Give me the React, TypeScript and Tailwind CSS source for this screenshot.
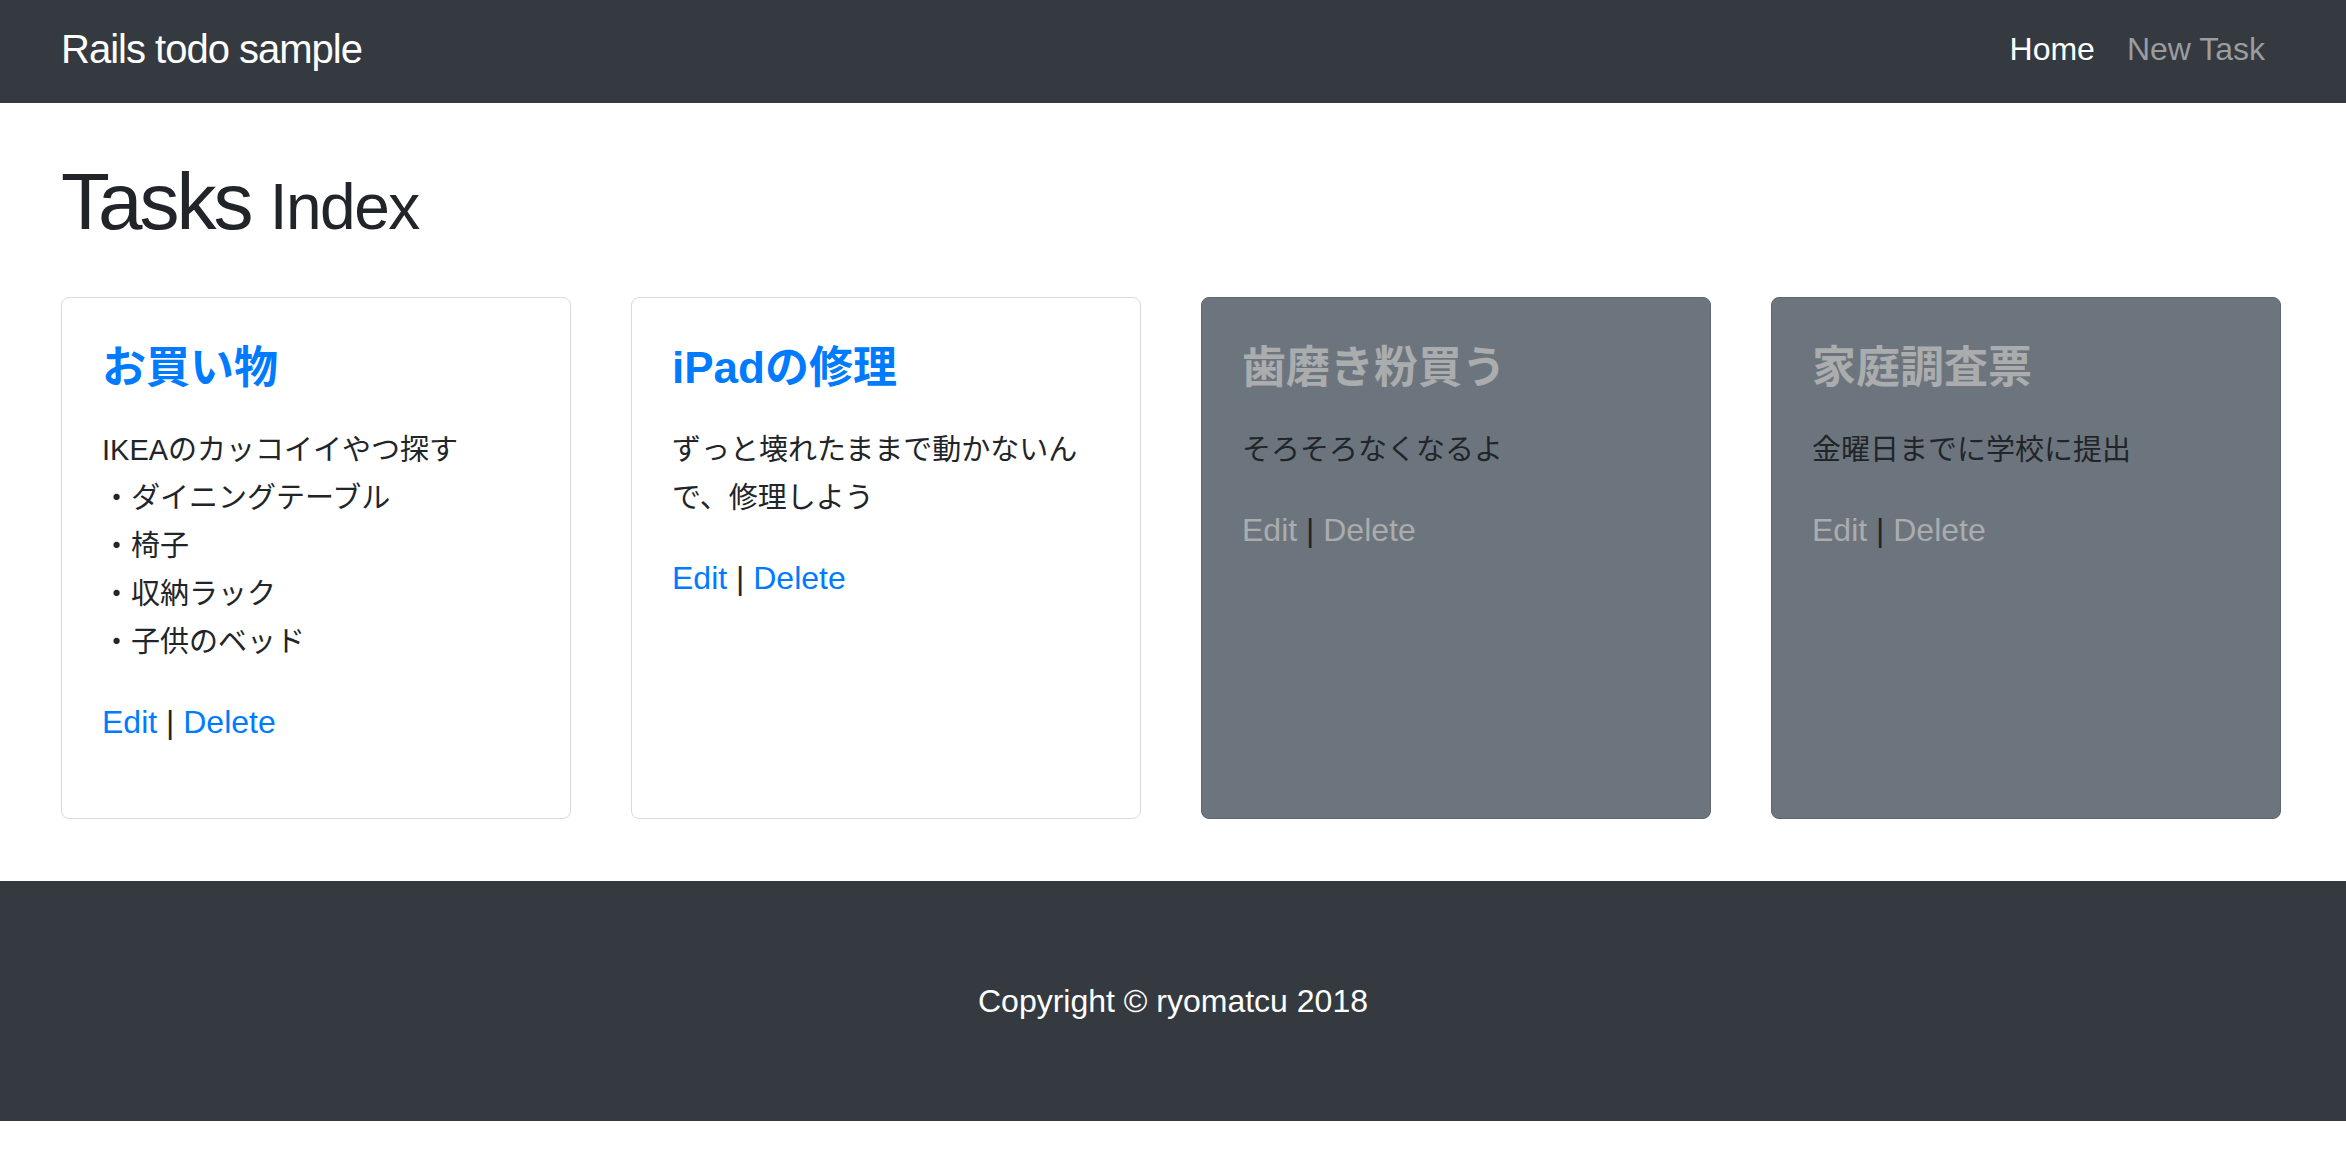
import React from "react";

const font = "font-['Liberation_Sans','Noto_Sans_CJK_JP',sans-serif]";

function Navbar() {
  return (
    <nav className="h-[103px] bg-[#343a40] flex items-center justify-between pl-[61px] pr-[65px] pb-[6px]">
      <a className="text-[40px] tracking-[-1px] text-white">Rails todo sample</a>
      <ul className="flex items-center text-[32px]">
        <li className="px-4 text-white">Home</li>
        <li className="px-4 text-[#9a9da0]">New Task</li>
      </ul>
    </nav>
  );
}

interface TaskCardProps {
  title: string;
  done?: boolean;
  children: React.ReactNode;
}

const TaskCard: React.FC<TaskCardProps> = ({ title, done, children }) => {
  const linkColor = done ? "text-[#aaacae]" : "text-[#007bff]";
  return (
    <div
      className={
        done
          ? "rounded-lg border border-[#5f666d] bg-[#6c757d] px-10 pt-10 pb-10"
          : "rounded-lg border border-[#dadada] bg-white px-10 pt-10 pb-10"
      }
    >
      <h5 className={`text-[44px] leading-[60px] font-bold mb-[28px] ${linkColor}`}>
        {title}
      </h5>
      <p className="text-[29px] leading-[48px] text-[#212529] mb-8">{children}</p>
      <p className="text-[32px] leading-[48px] text-[#212529] mb-8">
        <a className={linkColor}>Edit</a> | <a className={linkColor}>Delete</a>
      </p>
    </div>
  );
};

function App() {
  return (
    <div className={`${font} bg-white text-[#212529]`}>
      <Navbar />
      <main className="pl-[61px] pr-[65px] pt-[51px]">
        <h1 className="text-[80px] leading-[96px] tracking-[-3px] text-[#212529] mb-[42px]">
          Tasks <small className="text-[64px] tracking-[-1.5px]">Index</small>
        </h1>
        <div className="grid grid-cols-4 gap-[60px]">
          <TaskCard title="お買い物">
            IKEAのカッコイイやつ探す
            <br />・ダイニングテーブル
            <br />・椅子
            <br />・収納ラック
            <br />・子供のベッド
          </TaskCard>
          <TaskCard title="iPadの修理">ずっと壊れたままで動かないんで、修理しよう</TaskCard>
          <TaskCard title="歯磨き粉買う" done>
            そろそろなくなるよ
          </TaskCard>
          <TaskCard title="家庭調査票" done>
            金曜日までに学校に提出
          </TaskCard>
        </div>
      </main>
      <footer className="mt-[62px] h-[240px] bg-[#343a40] flex items-center justify-center">
        <p className="text-[32px] text-white">Copyright © ryomatcu 2018</p>
      </footer>
      <div className="h-[50px]" />
    </div>
  );
}

export default App;
